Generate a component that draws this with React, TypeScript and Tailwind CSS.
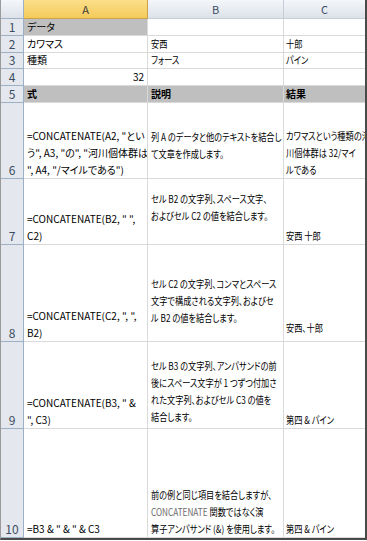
type Cell = {
  lines: React.ReactNode[];
  pb?: string;
  right?: boolean;
  fill?: boolean;
  bold?: boolean;
};

type Row = {
  label: string;
  h: string;
  cells: [Cell, Cell, Cell];
};

const rows: Row[] = [
  {
    label: "1",
    h: "h-[17px]",
    cells: [{ lines: ["データ"], fill: true }, { lines: [] }, { lines: [] }],
  },
  {
    label: "2",
    h: "h-[17px]",
    cells: [{ lines: ["カワマス"] }, { lines: ["安西"] }, { lines: ["十郎"] }],
  },
  {
    label: "3",
    h: "h-[16px]",
    cells: [{ lines: ["種類"] }, { lines: ["フォース"] }, { lines: ["パイン"] }],
  },
  {
    label: "4",
    h: "h-[17px]",
    cells: [{ lines: ["32"], right: true }, { lines: [] }, { lines: [] }],
  },
  {
    label: "5",
    h: "h-[17px]",
    cells: [
      { lines: ["式"], fill: true, bold: true },
      { lines: ["説明"], fill: true, bold: true },
      { lines: ["結果"], fill: true, bold: true },
    ],
  },
  {
    label: "6",
    h: "h-[76px]",
    cells: [
      {
        lines: [
          '=CONCATENATE(A2, "とい',
          'う", A3, "の", "河川個体群は',
          '", A4, "/マイルである")',
        ],
      },
      {
        lines: ["列 A のデータと他のテキストを結合し", "て文章を作成します。"],
        pb: "pb-[16px]",
      },
      { lines: ["カワマスという種類の河", "川個体群は 32/マイ", "ルである"] },
    ],
  },
  {
    label: "7",
    h: "h-[66px]",
    cells: [
      { lines: ['=CONCATENATE(B2, " ",', "C2)"] },
      {
        lines: ["セル B2 の文字列、スペース文字、", "およびセル C2 の値を結合します。"],
        pb: "pb-[20px]",
      },
      { lines: ["安西 十郎"] },
    ],
  },
  {
    label: "8",
    h: "h-[97px]",
    cells: [
      { lines: ['=CONCATENATE(C2, ", ",', "B2)"] },
      {
        lines: [
          "セル C2 の文字列、コンマとスペース",
          "文字で構成される文字列、およびセ",
          "ル B2 の値を結合します。",
        ],
        pb: "pb-[15px]",
      },
      { lines: ["安西、十郎"], pb: "pb-[5px]" },
    ],
  },
  {
    label: "9",
    h: "h-[87px]",
    cells: [
      { lines: ['=CONCATENATE(B3, " &', '", C3)'] },
      {
        lines: [
          "セル B3 の文字列、アンパサンドの前",
          "後にスペース文字が 1 つずつ付加さ",
          "れた文字列、およびセル C3 の値を",
          "結合します。",
        ],
        pb: "pb-[3px]",
      },
      { lines: ["第四 & パイン"] },
    ],
  },
  {
    label: "10",
    h: "h-[109px]",
    cells: [
      { lines: ['=B3 & " & " & C3'] },
      {
        lines: [
          "前の例と同じ項目を結合しますが、",
          <>
            <span className="text-[#6b6b6b]">CONCATENATE</span> 関数ではなく演
          </>,
          "算子アンパサンド (&) を使用します。",
        ],
      },
      { lines: ["第四 & パイン"] },
    ],
  },
];

export default function App() {
  return (
    <div className="w-[367px] h-[541px] bg-white overflow-hidden text-[10px] text-black font-['Noto_Sans_CJK_JP','Liberation_Sans',sans-serif] [font-feature-settings:'palt']">
      <div className="w-[367px] border-r-2 border-b-2 border-[#4a4a4a] border-l border-l-[#9a9a9a]">
        <div className="grid grid-cols-[23px_124px_136px_81px]">
          {/* column headers */}
          <div className="h-[19px] bg-gradient-to-b from-[#f4f6f9] to-[#dde2e9] border-r border-b border-[#9eb0c6]" />
          <div className="h-[19px] flex items-center justify-center bg-gradient-to-b from-[#fbdf8a] to-[#f5ca58] border-r border-b border-[#c9a24a] text-[11px] text-[#3b3b3b]">
            A
          </div>
          <div className="h-[19px] flex items-center justify-center bg-gradient-to-b from-[#f4f6f9] to-[#dde2e9] border-r border-b border-[#c5ced9] text-[11px] text-[#3b4c63]">
            B
          </div>
          <div className="h-[19px] flex items-center justify-center bg-gradient-to-b from-[#f4f6f9] to-[#dde2e9] border-b border-[#c5ced9] text-[11px] text-[#3b4c63]">
            C
          </div>

          {rows.map((row) => (
            <RowView key={row.label} row={row} />
          ))}
        </div>
      </div>
    </div>
  );
}

function RowView({ row }: { row: Row }) {
  return (
    <>
      <div
        className={`${row.h} flex items-end justify-center bg-[#e4e8ee] border-r border-b border-[#9eb0c6] text-[12px] leading-[17px] text-[#3b4c63]`}
      >
        {row.label}
      </div>
      {row.cells.map((c, i) => (
        <div
          key={i}
          className={`${row.h} flex flex-col justify-end overflow-hidden whitespace-nowrap leading-[17px] border-b border-[#d9d9d9] ${
            i < 2 ? "border-r" : ""
          } ${c.fill ? "bg-[#bfbfbf]" : ""} ${c.bold ? "font-bold" : ""} ${
            c.right ? "items-end pr-[3px]" : i === 2 ? "pl-[2px]" : "pl-[3px]"
          } ${c.pb ?? ""}`}
        >
          {c.lines.map((l, j) => (
            <div key={j} className={i > 0 && !c.bold ? "origin-left scale-x-[0.82]" : ""}>
              {l}
            </div>
          ))}
        </div>
      ))}
    </>
  );
}
